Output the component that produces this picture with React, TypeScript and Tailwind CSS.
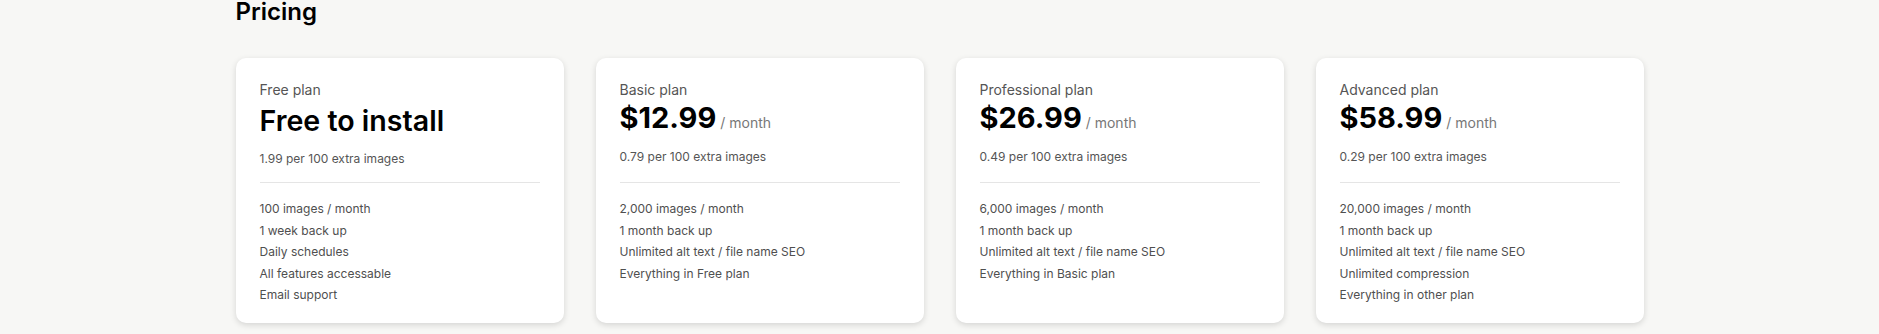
import React from "react";

interface Plan {
  name: string;
  price?: string; // undefined means free plan
  extra: string;
  features: string[];
}

const plans: Plan[] = [
  {
    name: "Free plan",
    extra: "1.99 per 100 extra images",
    features: [
      "100 images / month",
      "1 week back up",
      "Daily schedules",
      "All features accessable",
      "Email support",
    ],
  },
  {
    name: "Basic plan",
    price: "$12.99",
    extra: "0.79 per 100 extra images",
    features: [
      "2,000 images / month",
      "1 month back up",
      "Unlimited alt text / file name SEO",
      "Everything in Free plan",
    ],
  },
  {
    name: "Professional plan",
    price: "$26.99",
    extra: "0.49 per 100 extra images",
    features: [
      "6,000 images / month",
      "1 month back up",
      "Unlimited alt text / file name SEO",
      "Everything in Basic plan",
    ],
  },
  {
    name: "Advanced plan",
    price: "$58.99",
    extra: "0.29 per 100 extra images",
    features: [
      "20,000 images / month",
      "1 month back up",
      "Unlimited alt text / file name SEO",
      "Unlimited compression",
      "Everything in other plan",
    ],
  },
];

function PlanCard({ plan }: { plan: Plan }) {
  return (
    <div className="rounded-[10px] bg-white px-6 pt-[22px] pb-[17px] shadow-[0_2px_6px_rgba(0,0,0,0.14)]">
      <div className="h-[103px] border-b border-[#e5e5e5]">
        <div className="text-sm leading-5 text-[#555555]">{plan.name}</div>
        {plan.price ? (
          <div className="flex h-9 items-baseline gap-1">
            <span className="text-[29px] leading-9 font-bold text-black">
              {plan.price}
            </span>
            <span className="text-sm text-[#777777]">/ month</span>
          </div>
        ) : (
          <div className="mt-[3px] h-9 text-[28.6px] leading-9 font-semibold text-black">
            Free to install
          </div>
        )}
        <div
          className={`text-xs leading-5 text-[#555555] ${
            plan.price ? "mt-[11px]" : "mt-[10px]"
          }`}
        >
          {plan.extra}
        </div>
      </div>
      <ul className="mt-[15px]">
        {plan.features.map((f) => (
          <li key={f} className="text-xs leading-[21.6px] text-[#4f4f4f]">
            {f}
          </li>
        ))}
      </ul>
    </div>
  );
}

export default function App() {
  return (
    <div
      className="min-h-[334px] w-full bg-[#f7f7f5]"
      style={{ fontFamily: "Inter, 'Noto Sans', sans-serif" }}
    >
      <div className="mx-auto w-[1408px]">
        <h1 className="text-2xl leading-6 font-semibold text-black">Pricing</h1>
        <div className="mt-[34px] grid grid-cols-4 gap-8">
          {plans.map((p) => (
            <PlanCard key={p.name} plan={p} />
          ))}
        </div>
      </div>
    </div>
  );
}
